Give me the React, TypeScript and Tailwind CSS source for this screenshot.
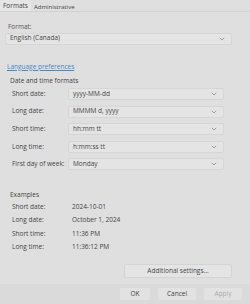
import React from 'react';

const Chevron: React.FC = () => (
    <svg width="6" height="4" viewBox="0 0 6 4" className="shrink-0">
        <path d="M0.8 0.8 L3 3 L5.2 0.8" fill="none" stroke="#8a8a8a" strokeWidth="0.8" />
    </svg>
);

const Dropdown: React.FC<{ value: string; className?: string }> = ({ value, className }) => (
    <div className={`flex items-center justify-between h-[12px] pl-[4px] pr-[6px] bg-[#e4e4e4] border border-[#d6d6d6] rounded-[2px] ${className || ''}`}>
        <span>{value}</span>
        <Chevron />
    </div>
);

const formats = [
    { label: 'Short date:', value: 'yyyy-MM-dd' },
    { label: 'Long date:', value: 'MMMM d, yyyy' },
    { label: 'Short time:', value: 'hh:mm tt' },
    { label: 'Long time:', value: 'h:mm:ss tt' },
    { label: 'First day of week:', value: 'Monday' },
];

const examples = [
    { label: 'Short date:', value: '2024-10-01' },
    { label: 'Long date:', value: 'October 1, 2024' },
    { label: 'Short time:', value: '11:36 PM' },
    { label: 'Long time:', value: '11:36:12 PM' },
];

export default function App() {
    return (
        <div className="w-[250px] h-[304px] bg-[#dfdfdf] text-[#444] text-[6.5px] leading-none overflow-hidden flex flex-col" style={{ fontFamily: '"Open Sans", "Noto Sans", sans-serif' }}>
            {/* Tabs */}
            <div className="flex items-end h-[12px] border-b border-[#d2d2d2]">
                <div className="px-[3px] pb-[2px] bg-[#e6e6e6] h-[12px] flex items-end">Formats</div>
                <div className="pl-[3px] pb-[1px] text-[6px]">Administrative</div>
            </div>

            <div className="flex flex-col pl-[5px] pr-[18px]">
                {/* Format */}
                <div className="pt-[12px] pl-[3px] text-[#555]">Format:</div>
                <Dropdown value="English (Canada)" className="mt-[2px]" />

                <a className="mt-[19px] ml-[2px] text-[#4a86c8] underline">Language preferences</a>

                {/* Date and time formats */}
                <div className="mt-[5px] flex flex-col">
                    <div className="pl-[5px] h-[12px] flex items-center">Date and time formats</div>
                    <div className="flex flex-col gap-[5.6px] mt-[1px] pl-[7px] pr-[8px]">
                        {formats.map((f) => (
                            <div key={f.label} className="flex items-center">
                                <span className="w-[56px] shrink-0">{f.label}</span>
                                <Dropdown value={f.value} className="flex-1" />
                            </div>
                        ))}
                    </div>
                </div>

                {/* Examples */}
                <div className="mt-[22px] flex flex-col">
                    <div className="pl-[5px]">Examples</div>
                    <div className="flex flex-col gap-[7px] mt-[5px] pl-[7px]">
                        {examples.map((e) => (
                            <div key={e.label} className="flex items-center">
                                <span className="w-[60px] shrink-0">{e.label}</span>
                                <span>{e.value}</span>
                            </div>
                        ))}
                    </div>
                </div>

                <div className="mt-[13px] flex justify-end">
                    <button className="w-[108px] h-[14px] bg-[#e4e4e4] border border-[#d4d4d4] rounded-[2px] text-[#444]">Additional settings...</button>
                </div>
            </div>

            {/* Bottom buttons */}
            <div className="mt-auto h-[20px] bg-[#dadada] flex items-center justify-end gap-[8px] pr-[8px]">
                <button className="w-[30px] h-[12px] bg-[#e2e2e2] rounded-[2px] text-[#444]">OK</button>
                <button className="w-[38px] h-[12px] bg-[#e2e2e2] rounded-[2px] text-[#444]">Cancel</button>
                <button className="w-[38px] h-[12px] bg-[#e2e2e2] rounded-[2px] text-[#aaa]">Apply</button>
            </div>
        </div>
    );
}
